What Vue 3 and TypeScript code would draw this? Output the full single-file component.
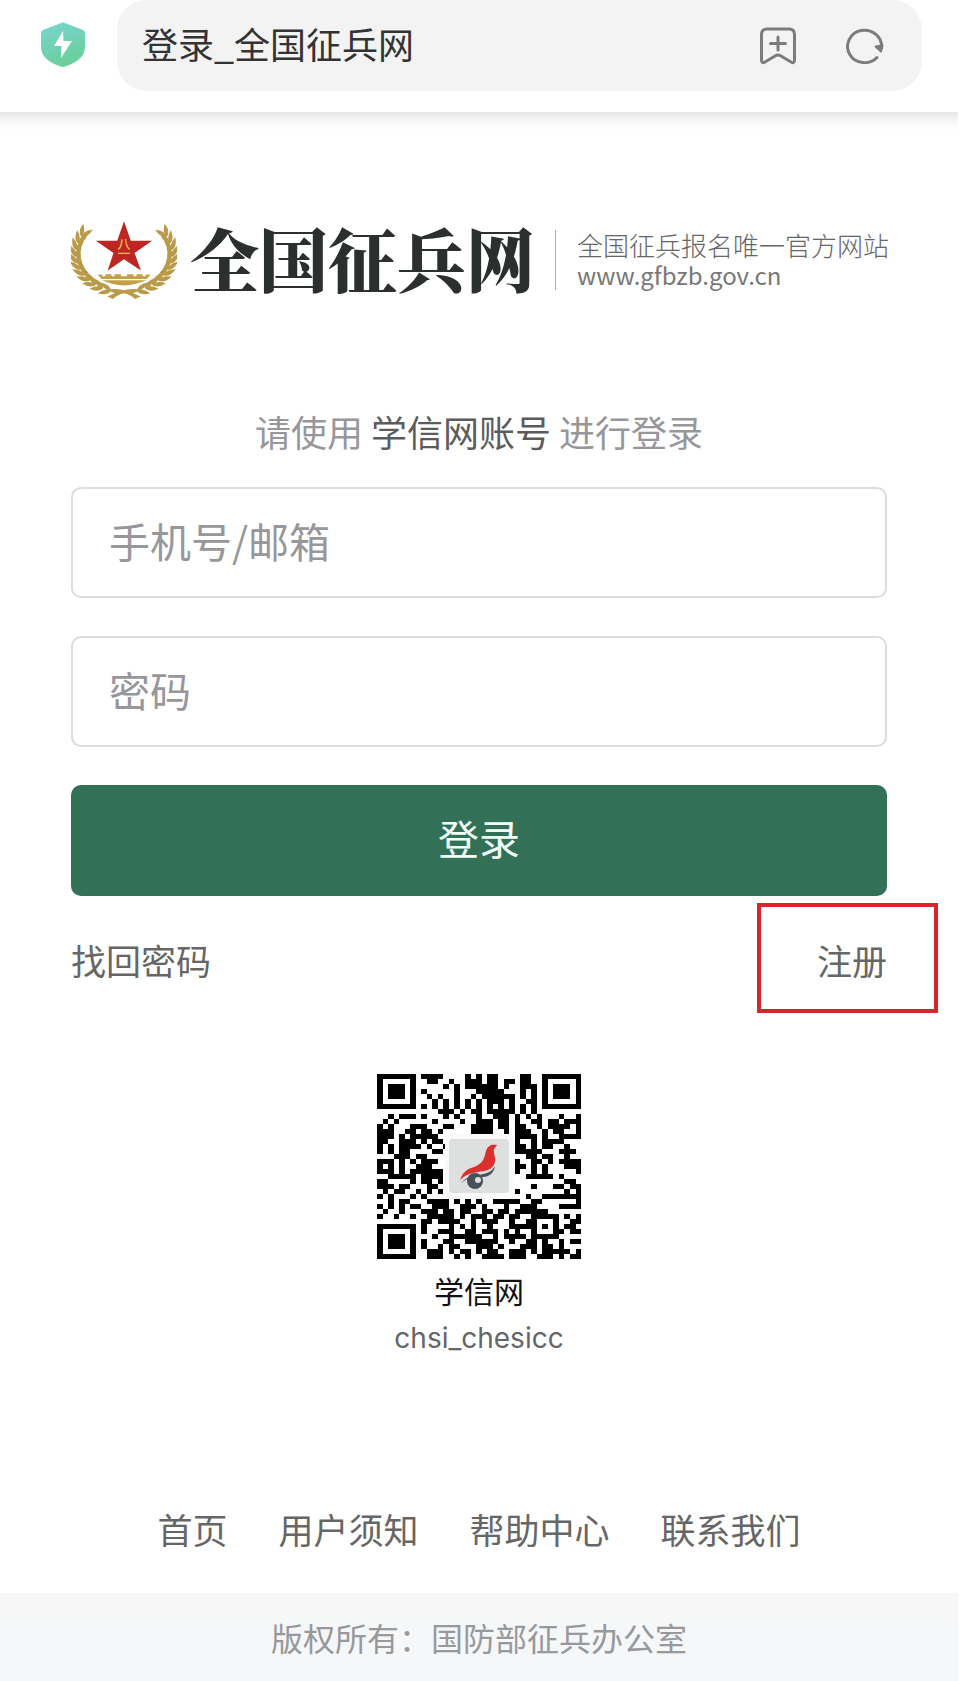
<script setup lang="ts">
import { ref } from 'vue'

interface Leaf {
  transform: string
}

const account = ref('')
const password = ref('')

const footerLinks: string[] = ['首页', '用户须知', '帮助中心', '联系我们']

// Leaves are spread in pairs along a cubic curve that forms one half of the wreath.
function cubic(a: number, b: number, c: number, d: number, t: number): number {
  const u = 1 - t
  return u * u * u * a + 3 * u * u * t * b + 3 * u * t * t * c + t * t * t * d
}

function wreath(): Leaf[] {
  const leaves: Leaf[] = []
  for (let i = 0; i < 11; i++) {
    const t = 0.08 + i * 0.08
    const x = cubic(180, 66, 8, 88, t)
    const y = cubic(244, 238, 130, 56, t)
    const dx = cubic(180, 66, 8, 88, t + 0.01) - x
    const dy = cubic(244, 238, 130, 56, t + 0.01) - y
    const angle = (Math.atan2(dy, dx) * 180) / Math.PI
    for (const spread of [-24, 24]) {
      leaves.push({ transform: `translate(${x.toFixed(1)} ${y.toFixed(1)}) rotate(${(angle + spread).toFixed(1)})` })
    }
  }
  return leaves
}

const leaves = wreath()

const qrRows: string[] = [
  '#######.####....#.#.##....##..#######',
  '#.....#..##..#..###.##.##.##..#.....#',
  '#.###.#.....#.#.######.#..###.#.###.#',
  '#.###.#.#.....#...#####...#.#.#.###.#',
  '#.###.#..#.#..#..#.######.#.#.#.###.#',
  '#.....#...#.#.#.#.#.###.#..##.#.....#',
  '#######.#.#.#.#.#.#.#.#.#.#.#.#######',
  '...........###.#.##.#####.#.#........',
  '..#.###.#...#.#...#..###.#.#.#...#..#',
  '.#.#......#....#..###.##.#..##.##.###',
  '#.#...###...##...####.##.##..#.####.#',
  '###..##.##.#.....####..#.###..#.##..#',
  '###.#.#####..............####.#..####',
  '##..###.#.##.............#..#.####...',
  '#.#.####.#..#............##.#.##..#..',
  '#.#.##....##.............#####...###.',
  '...###.##..................##.##..#..',
  '###.#.#.###..............#..##.#.####',
  '#.#.#..###...............##.#.#...###',
  '###.#.######.............#..#.#.....#',
  '..#####.####...............#####.#...',
  '##....#.##.#......................##.',
  '###.##...##.................#...##.##',
  '.#.##..#.#.#.............#........#.#',
  '#.#...#.#..................#..#######',
  '..#.##...####.#.#.#..#####..##......#',
  '#.#.#.##..###..###.#...#..###....####',
  '.#..#...###.##.##..##.##.######......',
  '#..#..#..#####.#.###.##.##..#####.#.#',
  '........##.####..#.###..#..##...#..##',
  '#######.#....#.#.#..#...#####.#.#.##.',
  '#.....#.#..###..##.###.#.#..#...##.##',
  '#.###.#...#..######..#.####.#####....',
  '#.###.#.#...##..######..#..##.#..#.##',
  '#.###.#.#..#.##...###.#...###.##.#...',
  '#.....#..###.#.##.#.##..###.#.#####.#',
  '#######..###..#.#..####.###..###.#.##'
]

const qrPath: string = qrRows
  .map((row, y) => [...row].map((cell, x) => (cell === '#' ? `M${x} ${y}h1v1h-1z` : '')).join(''))
  .join('')
</script>

<template>
  <div class="page">
    <header class="browser-bar">
      <svg class="shield" viewBox="0 0 44 45" aria-hidden="true">
        <defs>
          <linearGradient id="shieldFill" x1="0" y1="0" x2="0.3" y2="1">
            <stop offset="0" stop-color="#78d6d0" />
            <stop offset="1" stop-color="#6bcf9b" />
          </linearGradient>
        </defs>
        <path d="M20 1Q22 0 24 1L42 8Q44 9 44 11V25C44 36 33 42 22 45C11 42 0 36 0 25V11Q0 9 2 8Z" fill="url(#shieldFill)" />
        <path d="M22 9L13 24H20.500L20 36L31 19H22.500Z" fill="#fff" />
      </svg>
      <div class="address">
        <span class="address-title">登录_全国征兵网</span>
        <button class="icon-button" type="button" aria-label="添加书签">
          <svg class="bookmark" viewBox="0 0 36 38" fill="none" stroke="#7c7c7c" stroke-width="3" stroke-linecap="round" stroke-linejoin="round">
            <path d="M7 2H29Q34.500 2 34.500 7.500V33Q34.500 37 31 35L21 29Q18 27 15 29L5 35Q1.500 37 1.500 33V7.500Q1.500 2 7 2Z" />
            <path d="M18 10V23M10.500 16.500H25.500" />
          </svg>
        </button>
        <button class="icon-button" type="button" aria-label="刷新">
          <svg class="reload" viewBox="0 0 38 36" fill="none" stroke="#7c7c7c" stroke-width="3" stroke-linecap="round">
            <path d="M31 29.500A17 16.200 0 1 1 35.500 20" />
            <path d="M29.500 18.500L36.500 17.500L35 23.500Z" fill="#7c7c7c" stroke-width="2" stroke-linejoin="round" />
          </svg>
        </button>
      </div>
    </header>

    <main class="content">
      <div class="brand">
        <svg class="emblem" viewBox="35 33 312 236" aria-hidden="true">
          <g v-for="side in 2" :key="side" :transform="side === 2 ? 'translate(382 0) scale(-1 1)' : undefined">
            <path v-for="(leaf, i) in leaves" :key="i" :transform="leaf.transform" d="M0 0Q14 -14 41 0Q16 12 0 0Z" fill="#b99a48" />
            <path d="M224 266Q196 242 166 249L140 240Q180 228 240 259Z" fill="#b99a48" />
          </g>
          <path d="M191 37L211 94H274L222 130L241 182L191 149L143 182L160 130L108 94H171Z" fill="#bd2622" />
          <text class="emblem-text" x="191" y="120">八<tspan x="191" y="144">一</tspan></text>
          <path d="M113 194H127V199H136V193H154V199H163V193H182V199H200V193H219V199H228V193H246V199H255V194H270L258 207H125Z" fill="#c5a049" />
          <path d="M126 211H257Q191 241 126 211Z" fill="#c5a049" />
        </svg>
        <h1 class="brand-name">全国征兵网</h1>
        <div class="brand-note">
          <span class="slogan">全国征兵报名唯一官方网站</span>
          <span class="domain">www.gfbzb.gov.cn</span>
        </div>
      </div>

      <form class="login" @submit.prevent>
        <p class="prompt">请使用 <strong>学信网账号</strong> 进行登录</p>
        <input v-model="account" class="field" type="text" placeholder="手机号/邮箱" aria-label="手机号/邮箱" />
        <input v-model="password" class="field" type="password" placeholder="密码" aria-label="密码" />
        <button class="submit" type="submit">登录</button>
      </form>

      <div class="account-links">
        <a href="#recover">找回密码</a>
        <a class="register" href="#register">注册</a>
      </div>

      <figure class="qr">
        <svg class="qr-code" viewBox="0 0 204 185" role="img" aria-label="学信网">
          <path :d="qrPath" transform="scale(5.514 5)" fill="#000" shape-rendering="crispEdges" />
          <rect x="68" y="61" width="69" height="64" rx="5" fill="#fafafa" />
          <rect x="72" y="65" width="60" height="54" rx="4" fill="#dedfdf" />
          <path d="M84 109C91 101 98 102 106 100C112 99 115 97 118 92C117 99 112 103 106 103L92 105C89 105 87 107 84 109Z" fill="#48505c" />
          <circle cx="98" cy="107" r="8" fill="#48505c" />
          <circle cx="101" cy="106" r="3" fill="#dedfdf" />
          <path d="M83 106C86 97 91 95 97 93C107 89 107 84 109 77C111 71 115 70 120 71L117 75C116 79 119 83 118 88C116 96 108 97 101 98C94 99 88 101 83 106Z" fill="#dc302d" />
        </svg>
        <figcaption>
          <span class="qr-name">学信网</span>
          <span class="qr-id">chsi_chesicc</span>
        </figcaption>
      </figure>

      <nav class="footer-links">
        <a v-for="link in footerLinks" :key="link" href="#">{{ link }}</a>
      </nav>
    </main>

    <footer class="copyright">版权所有：国防部征兵办公室</footer>
  </div>
</template>

<style>
body {
  margin: 0;
  background: #fff;
}
</style>

<style scoped>
.page {
  margin-right: 22px;
  font-family: "Noto Sans CJK SC", sans-serif;
  font-weight: 400;
  color: #666;
}

a {
  color: inherit;
  text-decoration: none;
}

button,
input {
  font: inherit;
}

.browser-bar {
  display: flex;
  align-items: flex-start;
  height: 112px;
  padding: 0 36px 0 41px;
}

.browser-bar::after {
  content: "";
  position: absolute;
  top: 112px;
  left: 0;
  right: 22px;
  height: 18px;
  background: linear-gradient(#e6e6e6, #f3f3f3 35%, #fff);
}

.shield {
  flex: none;
  width: 44px;
  height: 45px;
  margin: 22px 32px 0 0;
}

.address {
  flex: 1;
  display: flex;
  align-items: center;
  gap: 50px;
  height: 91px;
  box-sizing: border-box;
  padding: 0 38px 0 25px;
  border-radius: 30px;
  background: #f3f3f3;
}

.address-title {
  flex: 1;
  padding-bottom: 5px;
  font-size: 36px;
  line-height: 48px;
  color: #333;
}

.icon-button {
  display: flex;
  padding: 0;
  border: 0;
  background: none;
}

.bookmark {
  width: 36px;
  height: 38px;
}

.reload {
  width: 38px;
  height: 36px;
}

.content {
  padding: 0 71px;
}

.brand {
  display: flex;
  align-items: center;
  height: 82px;
  padding-top: 107px;
}

.emblem {
  flex: none;
  width: 106px;
  height: 80px;
}

.emblem-text {
  font-family: "Noto Sans CJK SC", sans-serif;
  font-size: 38px;
  font-weight: 500;
  fill: #e8bd50;
  text-anchor: middle;
}

.brand-name {
  margin: 0 0 0 13px;
  padding-bottom: 4px;
  font-family: "Noto Serif CJK SC", "Noto Sans CJK SC", serif;
  font-size: 69px;
  font-weight: 900;
  line-height: 80px;
  color: #2b302f;
  white-space: nowrap;
}

.brand-note {
  display: flex;
  flex-direction: column;
  justify-content: center;
  height: 60px;
  margin-left: 20px;
  padding-left: 21px;
  border-left: 1px solid #aaa;
  white-space: nowrap;
  color: #777;
}

.slogan {
  font-size: 26px;
  font-weight: 300;
  line-height: 30px;
  color: #666;
}

.domain {
  font-size: 24px;
  line-height: 30px;
}

.login {
  display: flex;
  flex-direction: column;
  gap: 38px;
  padding-top: 106px;
}

.prompt {
  margin: 0 0 -6px;
  font-size: 36px;
  line-height: 48px;
  text-align: center;
  color: #97979b;
}

.prompt strong {
  font-weight: 400;
  color: #5c5c5c;
}

.field,
.submit {
  width: 100%;
  height: 111px;
  box-sizing: border-box;
  border-radius: 10px;
  font-size: 41px;
}

.field {
  padding: 0 36px 6px;
  border: 2px solid #dcdcde;
  background: #fff;
  color: #333;
  outline: none;
}

.field::placeholder {
  color: #97979b;
  opacity: 1;
}

.submit {
  padding: 0 0 8px;
  border: 0;
  background: #337058;
  color: #f2fff9;
}

.account-links {
  display: flex;
  justify-content: space-between;
  padding-top: 39px;
  font-size: 35px;
  line-height: 50px;
}

.register {
  position: relative;
}

.register::after {
  content: "";
  position: absolute;
  inset: -32px -51px -28px -60px;
  border: 4px solid #dc232c;
}

.qr {
  display: flex;
  flex-direction: column;
  align-items: center;
  margin: 0;
  padding-top: 89px;
}

.qr-code {
  width: 204px;
  height: 185px;
}

.qr figcaption {
  display: flex;
  flex-direction: column;
  align-items: center;
  padding-top: 7px;
  line-height: 48px;
}

.qr-name {
  font-size: 30px;
  color: #111;
}

.qr-id {
  font-family: Inter, "Noto Sans CJK SC", sans-serif;
  font-size: 28px;
}

.footer-links {
  display: flex;
  justify-content: center;
  gap: 51px;
  padding: 142px 0 39px;
  font-size: 35px;
  line-height: 50px;
}

.copyright {
  padding: 20px 0;
  background: linear-gradient(#f7f7f7, #f5f7fa);
  font-size: 32px;
  line-height: 48px;
  text-align: center;
  color: #97999d;
}
</style>
